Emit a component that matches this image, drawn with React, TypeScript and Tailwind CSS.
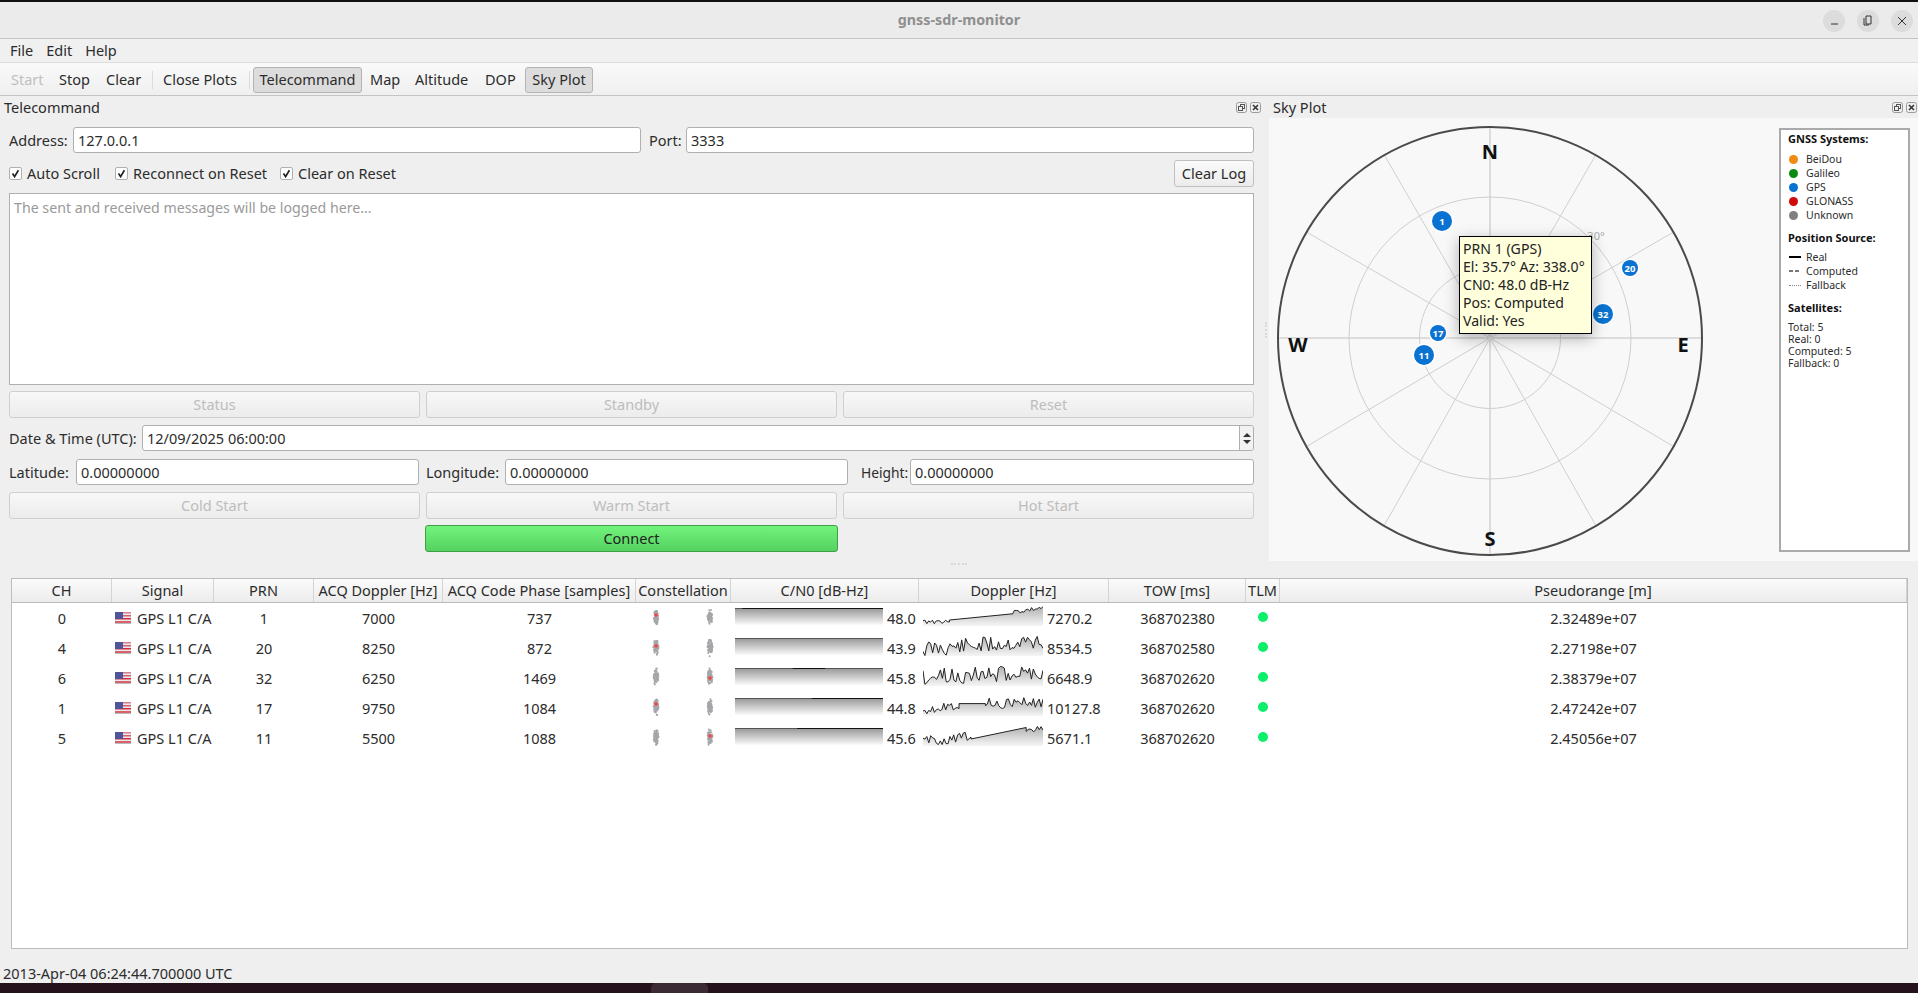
import { useMemo } from "react";

const rows = [
  { ch: 0, prn: 1, acq: 7000, code: 737, cn0: "48.0", dop: "7270.2", tow: 368702380, pr: "2.32489e+07", redAt: 0, redY: -1, seed: 3, thick: [0.05, 1],
    segs: [[0, 0.22, 15.6, 15, 5], [0.22, 0.73, 14, 8, 0], [0.73, 1, 6.6, 2, 5]] },
  { ch: 4, prn: 20, acq: 8250, code: 872, cn0: "43.9", dop: "8534.5", tow: 368702580, pr: "2.27198e+07", redAt: 0, redY: 0, seed: 11, thick: [0, 0],
    segs: [[0, 1, 13, 5, 17]] },
  { ch: 6, prn: 32, acq: 6250, code: 1469, cn0: "45.8", dop: "6648.9", tow: 368702620, pr: "2.38379e+07", redAt: 1, redY: 2, seed: 23, thick: [0.39, 0.61],
    segs: [[0, 1, 11, 6, 17]] },
  { ch: 1, prn: 17, acq: 9750, code: 1084, cn0: "44.8", dop: "10127.8", tow: 368702620, pr: "2.47242e+07", redAt: 0, redY: -2, seed: 37, thick: [0.52, 1],
    segs: [[0, 0.3, 13, 8, 11], [0.3, 0.52, 7.6, 7.6, 0], [0.52, 1, 7.5, 7, 11]] },
  { ch: 5, prn: 11, acq: 5500, code: 1088, cn0: "45.6", dop: "5671.1", tow: 368702620, pr: "2.45056e+07", redAt: 1, redY: 0, seed: 51, thick: [0.42, 1],
    segs: [[0, 0.4, 15, 11, 11], [0.4, 0.86, 13, 1.5, 0], [0.86, 1, 3, 3, 6]] },
];

const columns = [
  { label: "CH", w: "w-[100px]" },
  { label: "Signal", w: "w-[102px]" },
  { label: "PRN", w: "w-[100px]" },
  { label: "ACQ Doppler [Hz]", w: "w-[129px]" },
  { label: "ACQ Code Phase [samples]", w: "w-[193px]" },
  { label: "Constellation", w: "w-[95px]" },
  { label: "C/N0 [dB-Hz]", w: "w-[188px]" },
  { label: "Doppler [Hz]", w: "w-[190px]" },
  { label: "TOW [ms]", w: "w-[137px]" },
  { label: "TLM", w: "w-[34px]" },
  { label: "Pseudorange [m]", w: "flex-1" },
];

function rand(seed: number) {
  let s = seed;
  return () => {
    s = (s * 9301 + 49297) % 233280;
    return s / 233280;
  };
}

function DopplerSpark({ seed, segs, id }: { seed: number; segs: number[][]; id: string }) {
  const line = useMemo(() => {
    const r = rand(seed);
    const out: string[] = [];
    for (const [t0, t1, y0, y1, amp] of segs) {
      const n = amp === 0 ? 1 : Math.max(2, Math.round((t1 - t0) * 62));
      for (let i = 0; i <= n; i++) {
        const t = t0 + ((t1 - t0) * i) / n;
        const y = y0 + ((y1 - y0) * i) / n + (r() - 0.5) * amp;
        out.push(`${(t * 120).toFixed(1)},${Math.min(19.5, Math.max(0.5, y)).toFixed(1)}`);
      }
    }
    return out.join(" ");
  }, [seed, segs]);
  return (
    <svg width="120" height="24" className="shrink-0 -mt-[2px]">
      <defs>
        <linearGradient id={id} x1="0" y1="0" x2="0" y2="1">
          <stop offset="0" stopColor="#b0b0b0" />
          <stop offset="1" stopColor="#f6f6f6" />
        </linearGradient>
      </defs>
      <polygon points={`0,20 ${line} 120,20`} fill={`url(#${id})`} />
      <polyline points={line} fill="none" stroke="#222" strokeWidth="1" />
    </svg>
  );
}

function Cn0Spark({ id, thick }: { id: string; thick: number[] }) {
  return (
    <svg width="148" height="24" className="shrink-0 -mt-[2px]">
      <defs>
        <linearGradient id={id} x1="0" y1="0" x2="0" y2="1">
          <stop offset="0" stopColor="#969696" />
          <stop offset="1" stopColor="#fbfbfb" />
        </linearGradient>
      </defs>
      <rect x="0" y="2" width="148" height="17" fill={`url(#${id})`} />
      <line x1="0" y1="2.5" x2="148" y2="2.5" stroke="#555" strokeWidth="1" />
      <line x1={thick[0] * 148} y1="2.5" x2={thick[1] * 148} y2="2.5" stroke="#111" strokeWidth="1.2" />
    </svg>
  );
}

function Blob({ red, redY, seed }: { red: boolean; redY: number; seed: number }) {
  const dots = useMemo(() => {
    const r = rand(seed);
    return Array.from({ length: 70 }, () => {
      const y = (r() + r() + r()) / 3;
      const spread = 2.6 - Math.abs(y - 0.5) * 3;
      return { x: 5 + (r() - 0.5) * 2 * spread, y: 1 + y * 20 };
    });
  }, [seed]);
  return (
    <svg width="10" height="24" className="shrink-0 -mt-[2px]">
      {dots.map((d, i) => (
        <circle key={i} cx={d.x} cy={d.y} r="1" fill="#a6a6aa" />
      ))}
      {red && <circle cx="5" cy={10 + redY} r="1.8" fill="#f24444" />}
    </svg>
  );
}

function Flag() {
  return (
    <svg width="16" height="12" className="shrink-0 -mt-[2px]">
      <rect width="16" height="12" fill="#e8e8ee" />
      <rect y="0" width="16" height="1.5" fill="#d9818a" />
      <rect y="3" width="16" height="1.5" fill="#d9616a" />
      <rect y="6" width="16" height="1.5" fill="#d92b35" />
      <rect y="9" width="16" height="2" fill="#d9616a" />
      <rect y="11" width="16" height="1" fill="#bbb" />
      <rect width="8" height="7" fill="#50559a" />
    </svg>
  );
}

function DockButtons() {
  return (
    <div className="flex items-center gap-[3px]">
      <svg width="11" height="11" viewBox="0 0 11 11" fill="none" stroke="#555">
        <rect x="0.5" y="0.5" width="10" height="10" rx="2" stroke="#999" />
        <rect x="4.5" y="2.5" width="4" height="4" />
        <rect x="2.5" y="4.5" width="4" height="4" fill="#eee" />
      </svg>
      <svg width="11" height="11" viewBox="0 0 11 11" fill="none">
        <rect x="0.5" y="0.5" width="10" height="10" rx="2" stroke="#999" />
        <path d="M3 3 L8 8 M8 3 L3 8" strokeWidth="1.6" stroke="#333" />
      </svg>
    </div>
  );
}

function Field({ value, className }: { value: string; className: string }) {
  return (
    <div className={`h-[26px] bg-white border border-[#b0b0b0] rounded-[3px] px-[4px] pt-[2px] flex items-center text-[#2c2c2c] ${className}`}>
      {value}
    </div>
  );
}

function DisabledButton({ label }: { label: string }) {
  return (
    <div className="flex-1 h-[27px] rounded-[3px] border border-[#cfcfcf] bg-gradient-to-b from-[#f8f8f8] to-[#ececec] pt-[1px] flex items-center justify-center text-[#bdbdbd]">
      {label}
    </div>
  );
}

function Check({ label, className }: { label: string; className?: string }) {
  return (
    <div className={`flex items-center gap-[5px] ${className ?? ""}`}>
      <div className="w-[13px] h-[13px] border border-[#b0b0b0] rounded-[2px] bg-white flex items-center justify-center">
        <svg width="9" height="9" viewBox="0 0 9 9" fill="none">
          <path d="M1.5 4.5 L3.6 7.6 L7.4 1.2" stroke="#222" strokeWidth="1.7" />
        </svg>
      </div>
      <span>{label}</span>
    </div>
  );
}

function SkyChart() {
  const cx = 221;
  const cy = 220;
  const R = 212;
  const Rb = 217;
  const spokes = [30, 60, 120, 150, 210, 240, 300, 330];
  const sats = [
    { n: 1, x: 173, y: 103, r: 10 },
    { n: 20, x: 361, y: 150, r: 8 },
    { n: 32, x: 334, y: 196, r: 10 },
    { n: 17, x: 169, y: 215, r: 8 },
    { n: 11, x: 155, y: 237, r: 10 },
  ];
  return (
    <svg width="500" height="443" className="shrink-0">
      {spokes.map((a) => {
        const rad = (a * Math.PI) / 180;
        const ry = Math.cos(rad) < 0 ? Rb : R;
        return (
          <line key={a} x1={cx} y1={cy} x2={cx + R * Math.sin(rad)} y2={cy - ry * Math.cos(rad)} stroke="#cfcfcf" />
        );
      })}
      <line x1={cx - R} y1={cy} x2={cx + R} y2={cy} stroke="#dcdcdc" strokeWidth="2" />
      <line x1={cx} y1={cy - R} x2={cx} y2={cy + Rb} stroke="#dcdcdc" strokeWidth="2" />
      <circle cx={cx} cy={cy} r={70.5} fill="none" stroke="#cfcfcf" />
      <circle cx={cx} cy={cy} r={141} fill="none" stroke="#cfcfcf" />
      <path
        d={`M${cx - R} ${cy} A${R} ${R - 1} 0 0 1 ${cx + R} ${cy} A${R} ${Rb} 0 0 1 ${cx - R} ${cy}`}
        fill="none"
        stroke="#4a4a4a"
        strokeWidth="2"
      />
      <g fontFamily="'Noto Sans', sans-serif" fontWeight="700" fontSize="20" fill="#111" textAnchor="middle">
        <text x={cx} y={41}>N</text>
        <text x={cx} y={428}>S</text>
        <text x={29} y={234}>W</text>
        <text x={414} y={234}>E</text>
      </g>
      <text x={327} y={122} fontFamily="'Noto Sans', sans-serif" fontSize="11" fill="#aaa" textAnchor="middle">30°</text>
      {sats.map((s) => (
        <g key={s.n}>
          <circle cx={s.x} cy={s.y} r={s.r + 1.5} fill="#fff" />
          <circle cx={s.x} cy={s.y} r={s.r} fill="#0a72d0" />
          <text x={s.x} y={s.y + 3.5} fontFamily="'Noto Sans', sans-serif" fontWeight="700" fontSize="9.5" fill="#fff" textAnchor="middle">{s.n}</text>
        </g>
      ))}
    </svg>
  );
}

function Legend() {
  const systems = [
    ["BeiDou", "bg-[#f08a10]"],
    ["Galileo", "bg-[#0a8a10]"],
    ["GPS", "bg-[#0a72d0]"],
    ["GLONASS", "bg-[#d00a0a]"],
    ["Unknown", "bg-[#808080]"],
  ];
  return (
    <div className="w-[131px] h-[424px] mt-[10px] bg-white border-2 border-[#aaaaaa] px-[7px] pt-[1px] text-[10.5px] text-[#2c2c2c] leading-[14px] shrink-0">
      <div className="font-bold text-[11px] text-[#111] leading-[16px]">GNSS Systems:</div>
      <div className="mt-[5px]">
        {systems.map(([name, color]) => (
          <div key={name} className="flex items-center h-[14px]">
            <div className={`w-[9px] h-[9px] rounded-full ml-[1px] mr-[8px] ${color}`} />
            {name}
          </div>
        ))}
      </div>
      <div className="font-bold text-[11px] text-[#111] mt-[8px] leading-[16px]">Position Source:</div>
      <div className="mt-[4px]">
        <div className="flex items-center h-[14px]"><div className="w-[12px] h-[2px] bg-black ml-[1px] mr-[5px]" />Real</div>
        <div className="flex items-center h-[14px]">
          <div className="w-[12px] ml-[1px] mr-[5px] flex gap-[2px]">
            <div className="w-[4px] h-[2px] bg-[#777]" />
            <div className="w-[4px] h-[2px] bg-[#777]" />
          </div>
          Computed
        </div>
        <div className="flex items-center h-[14px]"><div className="w-[12px] border-t border-dotted border-[#888] ml-[1px] mr-[5px]" />Fallback</div>
      </div>
      <div className="font-bold text-[11px] text-[#111] mt-[8px] leading-[16px]">Satellites:</div>
      <div className="mt-[5px] leading-[12px]">
        <div>Total: 5</div>
        <div>Real: 0</div>
        <div>Computed: 5</div>
        <div>Fallback: 0</div>
      </div>
    </div>
  );
}

export default function App() {
  return (
    <div className="w-[1918px] h-[993px] overflow-hidden flex flex-col bg-[#efefef] text-[14.5px] text-[#2c2c2c] [font-family:'Noto_Sans',sans-serif]">
      <div className="h-[2px] bg-[#111] shrink-0" />

      {/* Title bar */}
      <div className="relative h-[37px] shrink-0 bg-[#ebebeb] border-b border-[#c4c4c4] flex items-center justify-center">
        <span className="font-bold text-[14.3px] text-[#8f8f8f]">gnss-sdr-monitor</span>
        <div className="absolute right-[5px] top-[8px] flex gap-[12px]">
          {["M8 14h7", "M9 6h5v8H9z M7 8v7h5", "M7 7l8 8M15 7l-8 8"].map((d) => (
            <div key={d} className="w-[22px] h-[22px] rounded-full bg-[#dcdcdc] flex items-center justify-center">
              <svg width="22" height="22" viewBox="0 0 22 22" fill="none" stroke="#333" strokeWidth="1"><path d={d} /></svg>
            </div>
          ))}
        </div>
      </div>

      {/* Menu */}
      <div className="h-[24px] shrink-0 bg-[#f0f0f0] border-b border-[#dcdcdc] flex items-center pl-[10px] gap-[13px]">
        <span>File</span><span>Edit</span><span>Help</span>
      </div>

      {/* Toolbar */}
      <div className="h-[33px] shrink-0 bg-gradient-to-b from-[#fafafa] to-[#efefef] border-b border-[#c4c4c4] flex items-center pl-[11px] pt-[2px]">
        <span className="w-[48px] text-[#c0c0c0]">Start</span>
        <span className="w-[47px]">Stop</span>
        <span className="w-[46px]">Clear</span>
        <div className="w-px h-[18px] bg-[#dcdcdc]" />
        <span className="ml-[10px] w-[86px]">Close Plots</span>
        <div className="w-px h-[18px] bg-[#dcdcdc]" />
        <div className="ml-[3px] h-[26px] w-[109px] rounded-[3px] border border-[#b4b4b4] bg-[#dcdcdc] flex items-center justify-center">Telecommand</div>
        <span className="ml-[8px] w-[45px]">Map</span>
        <span className="w-[70px]">Altitude</span>
        <span className="w-[40px]">DOP</span>
        <div className="h-[26px] w-[68px] rounded-[3px] border border-[#b4b4b4] bg-[#dcdcdc] flex items-center justify-center">Sky Plot</div>
      </div>

      {/* Docks */}
      <div className="flex shrink-0 h-[466px]">
        <div className="w-[1265px] shrink-0 flex flex-col">
          <div className="h-[22px] flex items-center justify-between pl-[4px] pr-[4px]">
            <span className="pt-[2px]">Telecommand</span>
            <DockButtons />
          </div>
          <div className="pl-[9px] pr-[11px] flex flex-col">
            <div className="flex items-center mt-[9px]">
              <span className="w-[64px] pt-[2px]">Address:</span>
              <Field value="127.0.0.1" className="w-[568px]" />
              <span className="ml-[8px] w-[37px] pt-[2px]">Port:</span>
              <Field value="3333" className="flex-1" />
            </div>
            <div className="flex items-center mt-[7px] h-[27px]">
              <Check label="Auto Scroll" className="w-[106px]" />
              <Check label="Reconnect on Reset" className="w-[165px]" />
              <Check label="Clear on Reset" />
              <div className="ml-auto w-[80px] h-[27px] rounded-[3px] border border-[#c0c0c0] bg-gradient-to-b from-[#fafafa] to-[#ececec] flex items-center justify-center">Clear Log</div>
            </div>
            <div className="mt-[6px] h-[192px] bg-white border border-[#b0b0b0] px-[4px] py-[3px] text-[14.2px] text-[#9a9a9a]">The sent and received messages will be logged here...</div>
            <div className="flex gap-[6px] mt-[6px]">
              <DisabledButton label="Status" />
              <DisabledButton label="Standby" />
              <DisabledButton label="Reset" />
            </div>
            <div className="flex items-center mt-[7px]">
              <span className="w-[133px] pt-[2px] whitespace-nowrap">Date &amp; Time (UTC):</span>
              <div className="flex-1 h-[26px] bg-white border border-[#b0b0b0] rounded-[3px] flex items-center pl-[4px]">
                <span className="flex-1 pt-[2px]">12/09/2025 06:00:00</span>
                <div className="w-[14px] h-full border-l border-[#b0b0b0] bg-[#f2f2f2] flex flex-col items-center justify-center gap-[3px] rounded-r-[3px]">
                  <div className="w-0 h-0 border-x-[4px] border-x-transparent border-b-[4px] border-b-[#333]" />
                  <div className="w-0 h-0 border-x-[4px] border-x-transparent border-t-[4px] border-t-[#333]" />
                </div>
              </div>
            </div>
            <div className="flex items-center mt-[8px]">
              <span className="w-[67px] pt-[2px]">Latitude:</span>
              <Field value="0.00000000" className="w-[343px]" />
              <span className="ml-[7px] w-[79px] pt-[2px]">Longitude:</span>
              <Field value="0.00000000" className="w-[343px]" />
              <span className="ml-[13px] w-[49px] pt-[2px] text-[13.8px]">Height:</span>
              <Field value="0.00000000" className="flex-1" />
            </div>
            <div className="flex gap-[6px] mt-[7px]">
              <DisabledButton label="Cold Start" />
              <DisabledButton label="Warm Start" />
              <DisabledButton label="Hot Start" />
            </div>
            <div className="flex gap-[6px] mt-[6px]">
              <div className="flex-1" />
              <div className="flex-1 h-[27px] rounded-[3px] border border-[#3f9f45] bg-gradient-to-b from-[#72f47c] to-[#55d160] pt-[1px] flex items-center justify-center text-[#222]">Connect</div>
              <div className="flex-1" />
            </div>
          </div>
        </div>

        {/* splitter handle */}
        <div className="w-[4px] shrink-0 pt-[226px]">
          <div className="h-[16px] border-l-2 border-dotted border-[#d8d8d8]" />
        </div>

        <div className="flex-1 flex flex-col min-w-0">
          <div className="h-[22px] flex items-center justify-between pl-[4px] pr-[1px]">
            <span className="pt-[2px]">Sky Plot</span>
            <DockButtons />
          </div>
          <div className="relative h-[443px] bg-[#f8f8f8] flex">
            <SkyChart />
            <div className="flex-1" />
            <Legend />
            <div className="w-[8px] shrink-0" />
            <div className="absolute left-[190px] top-[118px] w-[133px] h-[98px] bg-[#ffffdc] border border-black px-[3px] py-[3px] text-[14.1px] leading-[18px] text-[#222] shadow-[0_4px_14px_rgba(0,0,0,0.3)] whitespace-nowrap">
              <div>PRN 1 (GPS)</div>
              <div>El: 35.7° Az: 338.0°</div>
              <div>CN0: 48.0 dB-Hz</div>
              <div>Pos: Computed</div>
              <div>Valid: Yes</div>
            </div>
          </div>
        </div>
      </div>

      {/* splitter handle */}
      <div className="h-[16px] shrink-0 flex justify-center pt-[1px]">
        <div className="w-[16px] h-0 border-t-2 border-dotted border-[#d8d8d8]" />
      </div>

      {/* Table */}
      <div className="ml-[11px] mr-[10px] h-[371px] shrink-0 bg-white border border-[#bcbcbc] flex flex-col">
        <div className="h-[24px] shrink-0 flex border-b border-[#bcbcbc] bg-gradient-to-b from-[#fbfbfb] to-[#ececec]">
          {columns.map((c) => (
            <div key={c.label} className={`${c.w} shrink-0 pt-[1px] flex items-center justify-center border-r border-[#d4d4d4] whitespace-nowrap`}>{c.label}</div>
          ))}
        </div>
        {rows.map((r, i) => (
          <div key={r.ch} className="h-[30px] shrink-0 pt-[2px] flex items-center">
            <div className="w-[100px] text-center">{r.ch}</div>
            <div className="w-[102px] flex items-center gap-[6px] pl-[3px] whitespace-nowrap"><Flag />GPS L1 C/A</div>
            <div className="w-[100px] text-center">{r.prn}</div>
            <div className="w-[129px] text-center">{r.acq}</div>
            <div className="w-[193px] text-center">{r.code}</div>
            <div className="w-[95px] flex pl-[15px] gap-[44px]">
              <Blob red={r.redAt === 0} redY={r.redY} seed={r.seed + 5} />
              <Blob red={r.redAt === 1} redY={r.redY} seed={r.seed + 9} />
            </div>
            <div className="w-[188px] flex items-center pl-[4px] gap-[4px]">
              <Cn0Spark id={`cn-${i}`} thick={r.thick} />
              <span>{r.cn0}</span>
            </div>
            <div className="w-[190px] flex items-center pl-[4px] gap-[4px] whitespace-nowrap">
              <DopplerSpark seed={r.seed} segs={r.segs} id={`dop-${i}`} />
              <span>{r.dop}</span>
            </div>
            <div className="w-[137px] text-center">{r.tow}</div>
            <div className="w-[34px] flex justify-center"><div className="w-[10px] h-[10px] rounded-full bg-[#0cef6b] -mt-[4px]" /></div>
            <div className="flex-1 text-center">{r.pr}</div>
          </div>
        ))}
      </div>

      {/* Status bar */}
      <div className="flex-1 flex items-end pl-[3px] pb-[1px] leading-[18px]">2013-Apr-04 06:24:44.700000 UTC</div>
      <div className="h-[10px] shrink-0 bg-[#24111c] flex justify-center">
        <div className="w-[57px] h-[10px] rounded-t-[5px] bg-[#3b2a34] mr-[560px]" />
      </div>
    </div>
  );
}
